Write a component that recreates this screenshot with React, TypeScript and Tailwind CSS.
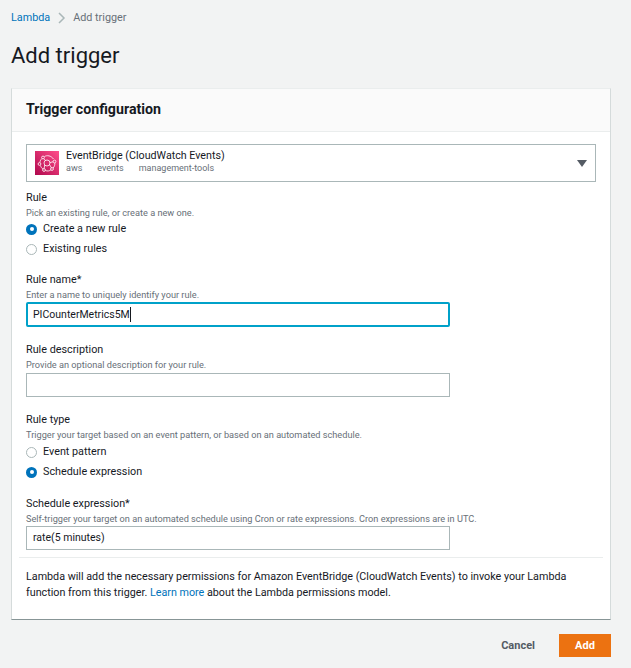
const font = "font-['Roboto',sans-serif]";

function Hint({ children }: { children: React.ReactNode }) {
  return <p className="h-[13px] text-[9.200px] leading-[13px] text-[#687078]">{children}</p>;
}

function Label({ children }: { children: React.ReactNode }) {
  return <p className="h-[16px] text-[10.800px] leading-[16px] text-[#16191f]">{children}</p>;
}

function Radio({ label, checked }: { label: string; checked?: boolean }) {
  return (
    <div className="flex h-[20px] items-center gap-[6px]">
      {checked ? (
        <span className="flex h-[11px] w-[11px] items-center justify-center rounded-full bg-[#0073bb]">
          <span className="h-[4px] w-[4px] rounded-full bg-white" />
        </span>
      ) : (
        <span className="h-[11px] w-[11px] rounded-full border border-[#aab7b8] bg-white" />
      )}
      <span className="text-[10.800px] leading-[16px] text-[#16191f]">{label}</span>
    </div>
  );
}

function EventBridgeIcon() {
  return (
    <svg width="24" height="24" viewBox="0 0 24 24" className="shrink-0">
      <defs>
        <linearGradient id="eb" x1="0" y1="1" x2="1" y2="0">
          <stop offset="0" stopColor="#b0084d" />
          <stop offset="1" stopColor="#ff4f8b" />
        </linearGradient>
      </defs>
      <rect width="24" height="24" fill="url(#eb)" />
      <g fill="none" stroke="#fff" strokeWidth="0.8">
        <circle cx="12" cy="12" r="3" />
        <circle cx="8" cy="6.5" r="1.4" />
        <circle cx="4.5" cy="13" r="1.4" />
        <circle cx="9" cy="19" r="1.4" />
        <circle cx="17" cy="18" r="1.4" />
        <circle cx="19.5" cy="10.5" r="1.4" />
        <path d="M9.5 5.5C12 4 16 4.5 18.500 8M5 11.500C5 9.500 6 8.500 7 7.500M5.500 14.500C6 16.500 7 17.500 8 18M10.400 19.500C12.500 20.500 14.500 19.800 15.800 19M18.200 17C19.500 15.500 20 13.500 19.800 12M9 7.800L10.500 9.500M14.500 13.500L16.500 17M15 11.500L18.200 10.800M9.800 14L9 17.600" />
      </g>
    </svg>
  );
}

export default function App() {
  return (
    <div className={`${font} flex h-[668px] w-[631px] flex-col overflow-hidden bg-[#f2f3f3] text-[#16191f]`}>
      <nav className="flex h-[35px] items-center pl-[11px] pt-[1px] text-[10.800px]">
        <span className="text-[#0073bb]">Lambda</span>
        <svg width="10" height="14" viewBox="0 0 10 14" fill="none" stroke="#aab7b8" strokeWidth="1.500" className="ml-[7px] mr-[6px]">
          <path d="M2 2l5 5-5 5" />
        </svg>
        <span className="text-[#687078]">Add trigger</span>
      </nav>

      <h1 className="ml-[11px] mt-[6px] h-[47px] text-[22px] leading-[30px]">Add trigger</h1>

      <section className="ml-[11px] h-[532px] w-[600px] border-b border-l border-r border-t border-b-[#879596] border-l-[#d5dbdb] border-r-[#d5dbdb] border-t-[#eaeded] bg-white">
        <header className="flex h-[43px] items-center border-b border-[#eaeded] bg-[#fafafa] px-[14px]">
          <h2 className="text-[14.200px] font-bold">Trigger configuration</h2>
        </header>

        <div className="px-[14px] pt-[12px]">
          <div className="flex h-[38px] items-center gap-[7px] border border-[#aab7b8] pl-[8px] pr-[8px]">
            <EventBridgeIcon />
            <div className="flex-1 pb-[2px]">
              <p className="h-[13px] text-[10.700px] leading-[13px]">EventBridge (CloudWatch Events)</p>
              <p className="flex h-[13px] gap-[15px] text-[9px] leading-[13px] text-[#687078]">
                <span>aws</span>
                <span>events</span>
                <span>management-tools</span>
              </p>
            </div>
            <span className="h-0 w-0 border-x-[5px] border-t-[7px] border-x-transparent border-t-[#545b64]" />
          </div>

          <div className="mt-[8px]">
            <Label>Rule</Label>
            <Hint>Pick an existing rule, or create a new one.</Hint>
            <Radio label="Create a new rule" checked />
            <Radio label="Existing rules" />
          </div>

          <div className="mt-[13px]">
            <Label>Rule name*</Label>
            <Hint>Enter a name to uniquely identify your rule.</Hint>
            <div className="mt-[1px] flex h-[25px] w-[424px] items-center rounded-[2px] border-2 border-[#00a1c9] pl-[5px] text-[10.500px]">
              PICounterMetrics5M
              <span className="h-[15px] w-px bg-[#16191f]" />
            </div>
          </div>

          <div className="mt-[15px]">
            <Label>Rule description</Label>
            <Hint>Provide an optional description for your rule.</Hint>
            <div className="mt-[2px] h-[24px] w-[424px] border border-[#aab7b8]" />
          </div>

          <div className="mt-[15px]">
            <Label>Rule type</Label>
            <Hint>Trigger your target based on an event pattern, or based on an automated schedule.</Hint>
            <div className="pt-[1px]">
              <Radio label="Event pattern" />
              <Radio label="Schedule expression" checked />
            </div>
          </div>

          <div className="mt-[14px]">
            <Label>Schedule expression*</Label>
            <Hint>Self-trigger your target on an automated schedule using Cron or rate expressions. Cron expressions are in UTC.</Hint>
            <div className="mt-[1px] flex h-[24px] w-[424px] items-center border border-[#aab7b8] pl-[6px] text-[10.500px]">
              rate(5 minutes)
            </div>
          </div>
        </div>

        <div className="mx-[7px] mt-[7px] border-t border-[#eaeded] px-[7px] pt-[11px] text-[10.750px] leading-[16px]">
          <p>
            Lambda will add the necessary permissions for Amazon EventBridge (CloudWatch Events) to invoke your Lambda
            <br />
            function from this trigger. <span className="text-[#0073bb]">Learn more</span> about the Lambda permissions model.
          </p>
        </div>
      </section>

      <footer className="mt-[14px] mr-[20px] flex items-center justify-end gap-[24px]">
        <span className="pt-[1px] text-[11px] font-bold text-[#545b64]">Cancel</span>
        <span className="flex h-[23px] w-[52px] items-center justify-center bg-[#ec7211] pt-[1px] text-[11px] font-bold text-white">Add</span>
      </footer>
    </div>
  );
}
